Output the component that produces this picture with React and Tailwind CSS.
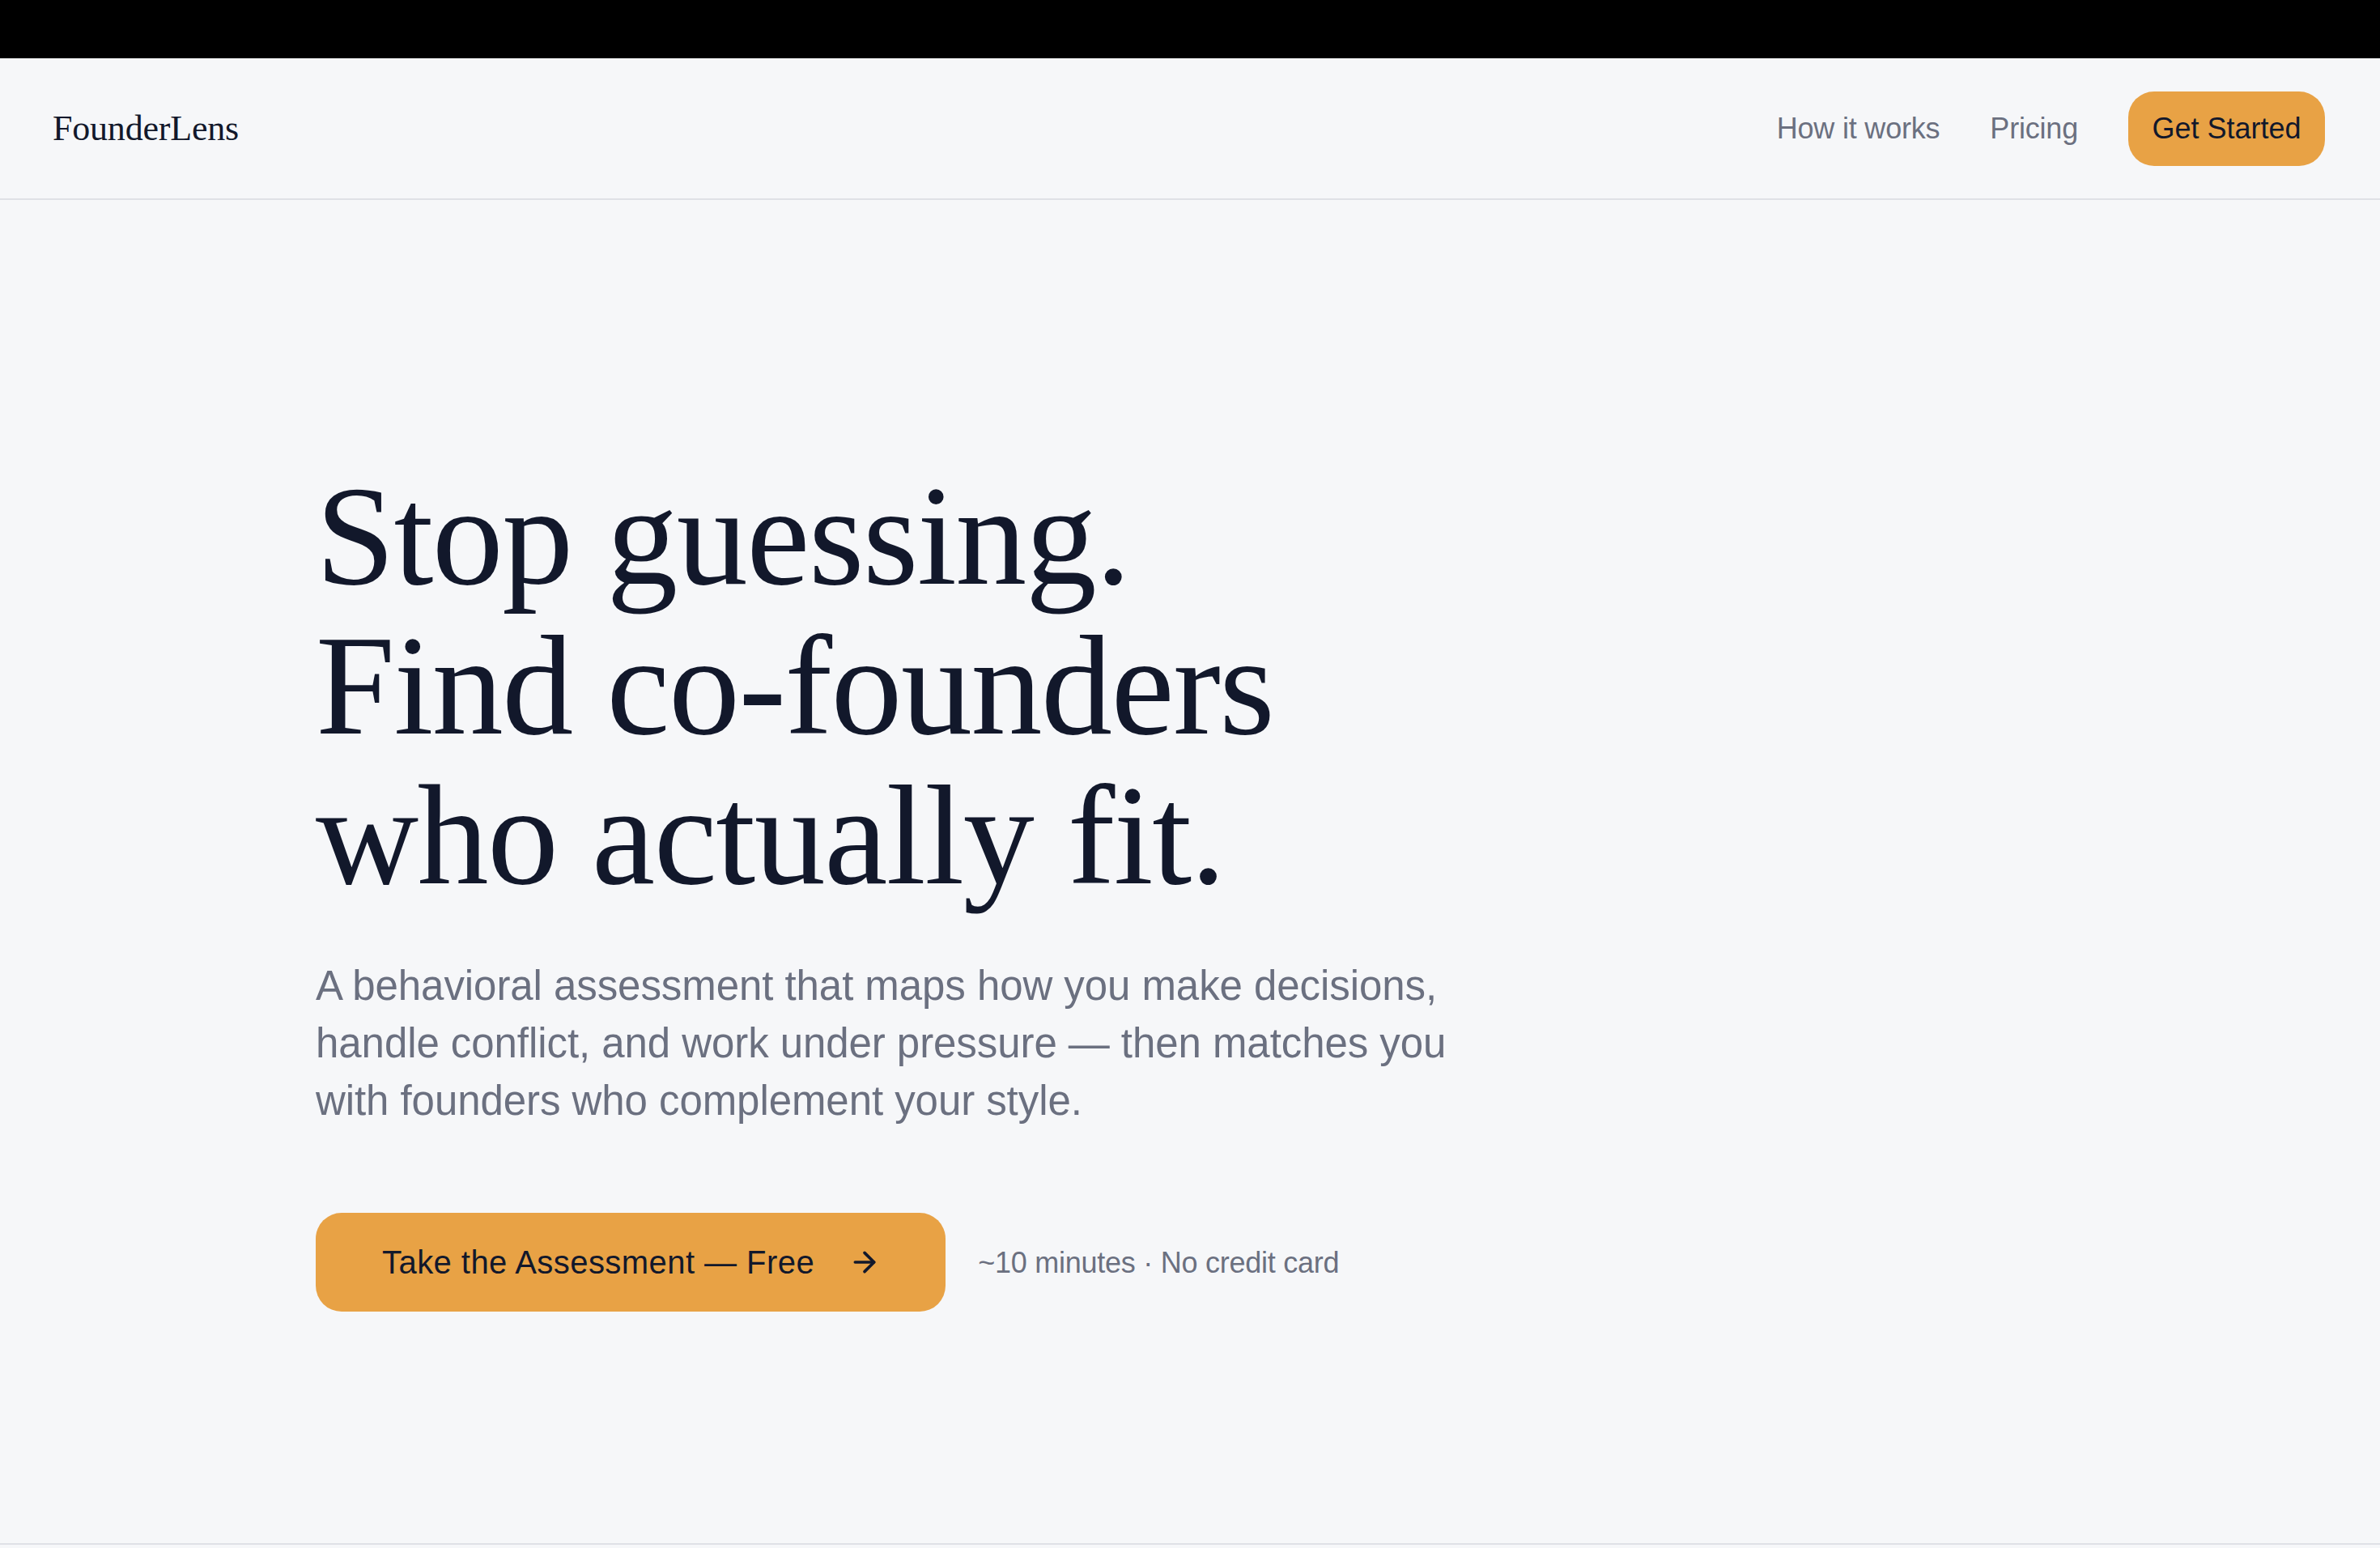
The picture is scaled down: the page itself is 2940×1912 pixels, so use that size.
import { ArrowRight } from "lucide-react";

const sans = "font-['Liberation_Sans',Arial,sans-serif]";
const serif = "font-['Liberation_Serif','Times_New_Roman',serif]";

const App = () => {
  return (
    <div className={`min-h-[1912px] bg-[#f6f7f9] ${sans}`}>
      <div className="h-[72px] bg-black" />

      <header className="h-[175px] flex items-center justify-between pl-[65px] pr-[68px] border-b-2 border-[#dfe1e6]">
        <span className={`${serif} text-[44px] tracking-[-0.2px] text-[#12182b]`}>FounderLens</span>
        <nav className="flex items-center gap-[62px]">
          <a className="text-[36px] tracking-[-0.2px] text-[#6b7080]">How it works</a>
          <a className="text-[36px] tracking-[-0.2px] text-[#6b7080]">Pricing</a>
          <a className="h-[92px] w-[243px] flex items-center justify-center rounded-[32px] bg-[#e8a245] text-[36px] text-[#12182b]">
            Get Started
          </a>
        </nav>
      </header>

      <main className="h-[1661px] pl-[390px] pt-[323px] border-b-2 border-[#dfe1e6]">
        <h1 className={`${serif} text-[176px] leading-[184.8px] tracking-[-1.5px] text-[#12182b]`}>
          Stop guessing.
          <br />
          Find co-founders
          <br />
          who actually fit.
        </h1>
        <p className="mt-[58px] text-[51px] leading-[71px] tracking-[-0.07px] text-[#6b7080]">
          A behavioral assessment that maps how you make decisions,
          <br />
          handle conflict, and work under pressure — then matches you
          <br />
          with founders who complement your style.
        </p>
        <div className="mt-[103px] flex items-center gap-[40px]">
          <a className="h-[122px] pl-[82px] pr-[80px] flex items-center gap-[42px] rounded-[32px] bg-[#e8a245] text-[40px] tracking-[0.45px] text-[#12182b]">
            Take the Assessment — Free
            <ArrowRight className="w-[40px] h-[40px]" strokeWidth={2.2} />
          </a>
          <span className="mt-[2px] text-[36px] tracking-[-0.25px] text-[#6b7080]">~10 minutes · No credit card</span>
        </div>
      </main>
    </div>
  );
};

export default App;
